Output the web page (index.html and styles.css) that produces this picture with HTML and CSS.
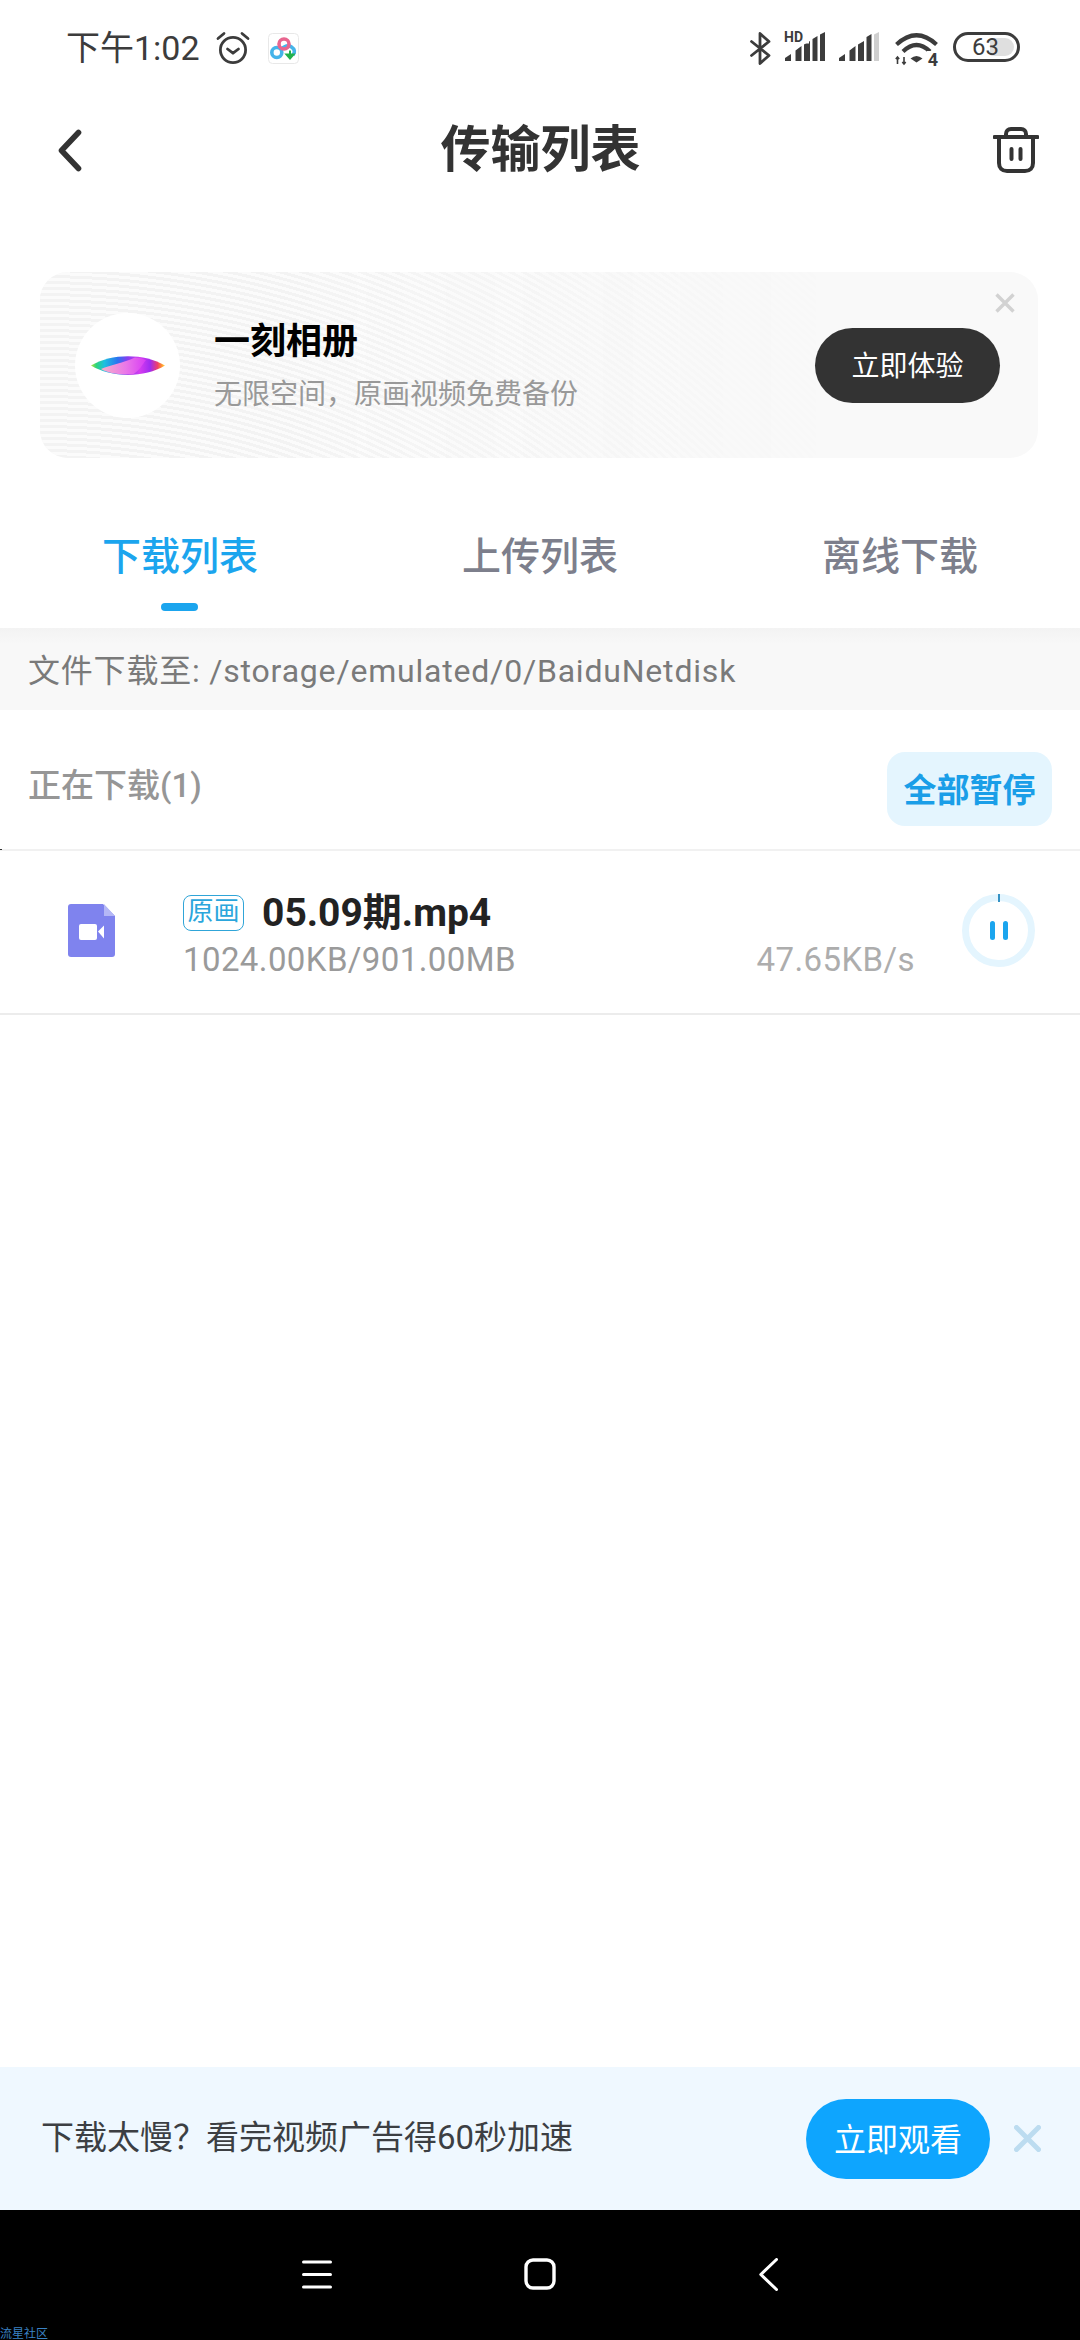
FILE: index.html
```html
<!DOCTYPE html>
<html lang="zh-CN">
<head>
<meta charset="utf-8">
<title>传输列表</title>
<link rel="stylesheet" href="styles.css">
</head>
<body>
<div class="page">
  <div class="status">
    <span class="time">下午1:02</span>
    <svg class="ic-alarm" viewBox="0 0 34 34" fill="none" stroke="#3c3c3c" stroke-width="2.800" stroke-linecap="round" stroke-linejoin="round"><circle cx="17" cy="19" r="12.600"/><path d="M11.500 18l5.500 4.200 5.500-4.200"/><path d="M2 7.500L8 2.500M32 7.500L26 2.500"/></svg>
    <svg class="ic-app" viewBox="0 0 31 31"><rect x=".5" y=".5" width="30" height="30" rx="4" fill="#fff" stroke="#e8e8e8"/><circle cx="8.800" cy="19.500" r="5" fill="none" stroke="#45b4ea" stroke-width="3.600"/><path d="M12.500 17c4-4 8-5 11-3 3 2 4 5 1.500 8" fill="none" stroke="#45b4ea" stroke-width="3.600"/><circle cx="16" cy="11" r="5" fill="none" stroke="#e8658f" stroke-width="3.600"/><path d="M22 17.500v5M18.500 21.500h7l-3.500 4z" fill="#22b14c" stroke="#22b14c" stroke-width="2"/></svg>
    <span class="status-gap"></span>
    <svg class="ic-bt" viewBox="0 0 21 33" fill="none" stroke="#3c3c3c" stroke-width="2.800" stroke-linecap="round" stroke-linejoin="round"><path d="M1.500 9.500L19 23.500 10 31.500V1.500L19 9.500 1.500 23.500"/></svg>
    <span class="hd-signal">
      <svg class="ic-sig" viewBox="0 0 40 29" fill="#3c3c3c"><path d="M0 29v-3l6-4v7zM10.500 29V18.500l6-4.500v15zM19 29V12.500l6-3.500v20zM27.500 29V7l5-3v25zM35 29V2.500l5-2.500v29z"/></svg>
      <span class="hd">HD</span>
    </span>
    <svg class="ic-sig ic-sig2" viewBox="0 0 40 29"><path fill="#3c3c3c" d="M0 29v-3l6-4v7zM10.500 29V18.500l6-4.500v15zM19 29V12.500l6-3.500v20zM27.500 29V5l5-3v27z"/><path fill="#cfcfcf" d="M35 29V2.500l5-2.500v29z"/></svg>
    <span class="wifi">
      <svg class="ic-wifi" viewBox="0 0 43 34" fill="none"><path d="M1.500 11.500Q21.500 -7 41.500 11.500" stroke="#3c3c3c" stroke-width="4.200"/><path d="M8 18.500Q21.500 5.500 35 18.500" stroke="#3c3c3c" stroke-width="4.200"/><path d="M15.500 25.500Q21.500 20.500 27.500 25.500L21.500 29.500z" fill="#3c3c3c"/><path d="M2.500 24v7M.8 26l1.700-2 1.700 2M9 31v-7M7.300 29l1.700 2 1.700-2" stroke="#3c3c3c" stroke-width="1.600"/></svg>
      <span class="wifi-num">4</span>
    </span>
    <span class="battery"><span class="battery-fill"></span><span class="battery-num">63</span></span>
  </div>

  <div class="header">
    <svg class="ic-back" viewBox="0 0 24 43" fill="none" stroke="#333" stroke-width="5.600" stroke-linecap="round" stroke-linejoin="round"><path d="M20.500 3.500L3.500 21.500 20.500 39.500"/></svg>
    <h1 class="title">传输列表</h1>
    <svg class="ic-trash" viewBox="0 0 46 46" fill="none" stroke="#333" stroke-width="4" stroke-linecap="round" stroke-linejoin="round"><path d="M1.500 10h43"/><path d="M13 9.500V7c0-3 2-5 5-5h10c3 0 5 2 5 5v2.500"/><path d="M6 10v26c0 5 3 8 8 8h18c5 0 8-3 8-8V10"/><path d="M18.500 22v10M27.500 22v10"/></svg>
  </div>

  <div class="banner">
    <div class="logo">
      <svg class="logo-mark" viewBox="0 0 74 19">
        <defs>
          <linearGradient id="lens" x1="0" x2="1" y1="0" y2="0"><stop offset="0" stop-color="#b8e23a"/><stop offset=".07" stop-color="#2ed47a"/><stop offset=".18" stop-color="#1fc0e0"/><stop offset=".36" stop-color="#2b74f0"/><stop offset=".5" stop-color="#8a3cf0"/><stop offset=".66" stop-color="#d63cf0"/><stop offset=".8" stop-color="#a02cf0"/><stop offset=".9" stop-color="#f0406a"/><stop offset=".96" stop-color="#ff9a2e"/><stop offset="1" stop-color="#ffd84a"/></linearGradient>
          <linearGradient id="lens2" x1="0" x2="1" y1="0" y2="0"><stop offset="0" stop-color="#f7b0c8"/><stop offset=".55" stop-color="#ea78e8"/><stop offset="1" stop-color="#d83cf4"/></linearGradient>
        </defs>
        <path d="M0 9.500C20 -3 54 -3 74 9.500 54 22 20 22 0 9.500z" fill="url(#lens)"/>
        <path d="M10 13C20 9 32 7 44 1.500 50 2 52 3 55 4 51 9 49 14 42 18.500 28 19 18 17.500 10 13z" fill="url(#lens2)"/>
      </svg>
    </div>
    <div class="banner-text">
      <div class="banner-title">一刻相册</div>
      <div class="banner-sub">无限空间，原画视频免费备份</div>
    </div>
    <button class="banner-btn">立即体验</button>
    <svg class="banner-close" viewBox="0 0 20 20" fill="none" stroke="#d2d2d2" stroke-width="3.400"><path d="M1.500 1.500l17 17M18.500 1.500l-17 17"/></svg>
  </div>

  <div class="tabs">
    <div class="tab active">下载列表<span class="tab-bar"></span></div>
    <div class="tab">上传列表</div>
    <div class="tab">离线下载</div>
  </div>

  <div class="path"><span class="path-text">文件下载至: /storage/emulated/0/BaiduNetdisk</span></div>

  <div class="section">
    <span class="section-title">正在下载(1)</span>
    <button class="section-btn">全部暂停</button>
  </div>

  <div class="row">
    <svg class="ic-file" viewBox="0 0 47 53"><path d="M3 0h32l12 12v38a3 3 0 0 1-3 3H3a3 3 0 0 1-3-3V3a3 3 0 0 1 3-3z" fill="#7f83ee"/><path d="M36 0l11 12H36z" fill="#b4b7f6"/><rect x="11" y="20" width="18" height="16" rx="2" fill="#fff"/><path d="M30 27.500l6-6v13z" fill="#fff"/></svg>
    <div class="row-text">
      <div class="row-top"><span class="tag">原画</span><span class="name">05.09期.mp4</span></div>
      <div class="row-bottom"><span class="size">1024.00KB/901.00MB</span><span class="speed">47.65KB/s</span></div>
    </div>
    <div class="ring">
      <span class="ring-tick"></span>
      <span class="pause"></span>
      <span class="pause"></span>
    </div>
  </div>

  <div class="spacer"></div>

  <div class="promo">
    <span class="promo-text">下载太慢？看完视频广告得60秒加速</span>
    <button class="promo-btn">立即观看</button>
    <svg class="promo-close" viewBox="0 0 27 27" fill="none" stroke="#bcdcf0" stroke-width="5" stroke-linecap="round"><path d="M2.500 2.500l22 22M24.500 2.500l-22 22"/></svg>
  </div>

  <div class="nav">
    <svg class="nav-menu" viewBox="0 0 30 29" fill="none" stroke="#fff" stroke-width="3" stroke-linecap="round"><path d="M1.500 2h27M1.500 14.500h27M1.500 27h27"/></svg>
    <svg class="nav-home" viewBox="0 0 32 32" fill="none" stroke="#fff" stroke-width="3.400"><rect x="2" y="2" width="28" height="28" rx="7"/></svg>
    <svg class="nav-back" viewBox="0 0 19 33" fill="none" stroke="#fff" stroke-width="3" stroke-linecap="round" stroke-linejoin="round"><path d="M17.500 1.500L1.800 16.500 17.500 31.500"/></svg>
    <span class="watermark">流星社区</span>
  </div>
</div>
</body>
</html>
```
FILE: styles.css
```css
* { box-sizing: border-box; }
html, body { margin: 0; padding: 0; background: #fff; }
body { font-family: Roboto, "Noto Sans CJK SC", sans-serif; }
button { border: 0; font-family: inherit; padding: 0; }
.page { width: 1080px; height: 2340px; display: flex; flex-direction: column; overflow: hidden; background: #fff; }

.status { height: 96px; display: flex; align-items: center; padding: 0 60px 0 66px; color: #3c3c3c; flex: none; }
.time { font-size: 34px; line-height: 40px; width: 134px; white-space: nowrap; }
.ic-alarm { width: 34px; height: 34px; margin-left: 16px; }
.ic-app { width: 31px; height: 31px; margin-left: 18px; }
.status-gap { flex: 1; }
.ic-bt { width: 21px; height: 33px; }
.hd-signal { position: relative; width: 40px; height: 29px; margin-left: 14px; margin-top: -3px; }
.hd { position: absolute; left: -1px; top: -1px; font-size: 14px; line-height: 13px; font-weight: 700; }
.ic-sig { width: 40px; height: 29px; display: block; }
.hd-signal .ic-sig { clip-path: polygon(0 40%, 60% 40%, 60% 0, 100% 0, 100% 100%, 0 100%); }
.ic-sig2 { margin-left: 14px; margin-top: -3px; }
.wifi { position: relative; width: 43px; height: 34px; margin-left: 16px; margin-top: 4px; }
.ic-wifi { width: 43px; height: 34px; display: block; }
.wifi-num { position: absolute; right: 0; bottom: -2px; font-size: 18px; line-height: 18px; font-weight: 700; background: #fff; padding-left: 1px; }
.battery { position: relative; width: 67px; height: 30px; margin-left: 15px; margin-top: -3px; border: 3.500px solid #3c3c3c; border-radius: 15px; display: flex; align-items: center; justify-content: center; overflow: hidden; }
.battery-fill { position: absolute; right: 3px; top: 3px; bottom: 3px; width: 24px; background: #dfdfdf; border-radius: 2px 9px 9px 2px; }
.battery-num { position: relative; font-size: 24px; line-height: 24px; margin-left: -2px; }

.header { height: 108px; display: grid; grid-template-columns: 1fr auto 1fr; align-items: center; padding: 0 41px 0 58px; flex: none; }
.ic-back { width: 24px; height: 43px; justify-self: start; }
.title { margin: 0 0 0 -16px; font-size: 50px; line-height: 60px; font-weight: 700; color: #333; }
.ic-trash { width: 46px; height: 46px; justify-self: end; }

.banner { position: relative; margin: 68px 42px 0 40px; height: 186px; flex: none; border-radius: 28px; background: #f9f9f9; display: flex; align-items: center; padding: 0 38px 0 35px; overflow: hidden; }
.banner::before { content: ""; position: absolute; inset: 0; background: repeating-radial-gradient(circle at 0 900px, #f3f3f3 0 3px, #fbfbfb 3px 6px); -webkit-mask-image: linear-gradient(90deg, #000 0, #000 25%, transparent 80%); mask-image: linear-gradient(90deg, #000 0, #000 25%, transparent 80%); }
.logo { position: relative; width: 105px; height: 105px; border-radius: 50%; background: #fff; display: flex; align-items: center; justify-content: center; flex: none; }
.logo-mark { width: 74px; height: 19px; }
.banner-text { position: relative; flex: 1; margin-left: 34px; margin-top: 4px; }
.banner-title { font-size: 36px; line-height: 48px; font-weight: 700; color: #000; margin-top: -3px; }
.banner-sub { font-size: 28px; line-height: 38px; color: #999; margin-top: 10px; }
.banner-btn { position: relative; width: 185px; height: 75px; padding-bottom: 2px; border-radius: 38px; background: #333; color: #fff; font-size: 28px; }
.banner-close { position: absolute; right: 23px; top: 21px; width: 20px; height: 20px; }

.tabs { display: grid; grid-template-columns: repeat(3, 1fr); height: 170px; flex: none; padding-top: 74px; }
.tab { position: relative; text-align: center; font-size: 39px; line-height: 50px; font-weight: 500; color: #7d7f8c; }
.tab.active { color: #1ba5ee; }
.tab-bar { position: absolute; left: 161px; top: 71px; width: 37px; height: 8px; border-radius: 4px; background: #1ba5ee; }

.path { height: 82px; flex: none; display: flex; align-items: center; padding-left: 28px; background: linear-gradient(#f3f3f3, #f8f8f8 16px); }
.path-text { font-size: 32px; line-height: 42px; color: #7a7a7a; letter-spacing: .8px; margin-top: 3px; }

.section { height: 139px; flex: none; display: flex; align-items: center; justify-content: space-between; padding: 42px 28px 23px; }
.section-title { font-size: 33px; line-height: 44px; font-weight: 500; color: #969696; margin-bottom: 7px; }
.section-btn { width: 165px; height: 74px; padding-bottom: 2px; border-radius: 18px; background: #e4f5fe; color: #1a9ee8; font-size: 33px; font-weight: 700; }

.row { position: relative; height: 166px; flex: none; display: flex; align-items: center; padding: 0 45px 0 68px; border-top: 2px solid #f1f1f1; border-bottom: 2px solid #ececec; }
.row::before { content: ""; position: absolute; left: 0; top: -2px; width: 2px; height: 1px; background: #333; }
.ic-file { width: 47px; height: 53px; flex: none; margin-top: -4px; }
.row-text { flex: 1; margin-left: 68px; }
.row-top { display: flex; align-items: center; height: 46px; margin-top: 8px; }
.tag { width: 61px; height: 36px; border: 1.500px solid #30a5d8; border-radius: 8px; color: #2ba6dc; font-size: 26px; line-height: 31px; text-align: center; white-space: nowrap; }
.name { margin-left: 18px; font-size: 39px; line-height: 46px; font-weight: 700; color: #222; }
.row-bottom { display: flex; justify-content: space-between; margin-top: 2px; font-size: 33px; line-height: 44px; letter-spacing: .4px; }
.size { color: #9a9a9a; }
.speed { color: #adadad; }
.ring { position: relative; flex: none; width: 73px; height: 73px; margin-left: 47px; margin-top: -3px; border: 7px solid #e4f5fe; border-radius: 50%; display: flex; align-items: center; justify-content: center; gap: 8px; }
.ring-tick { position: absolute; left: 29px; top: -7px; width: 2px; height: 8px; background: #3592c4; }
.pause { width: 5px; height: 19px; border-radius: 3px; background: #1ba5ee; }

.spacer { flex: 1; }

.promo { height: 143px; flex: none; display: flex; align-items: center; padding: 0 39px 0 41px; background: #eff8ff; }
.promo-text { flex: 1; font-size: 33px; line-height: 44px; color: #3c3f43; margin-bottom: 2px; white-space: nowrap; }
.promo-btn { width: 184px; height: 80px; padding-bottom: 4px; border-radius: 40px; background: #0ea5fe; color: #fff; font-size: 32px; }
.promo-close { width: 27px; height: 27px; margin-left: 24px; }

.nav { position: relative; height: 130px; flex: none; background: #000; display: flex; align-items: center; justify-content: center; }
.nav-menu { width: 30px; height: 29px; margin-top: -2px; }
.nav-home { width: 32px; height: 32px; margin-left: 192px; margin-top: -2px; }
.nav-back { width: 19px; height: 33px; margin-left: 203px; margin-top: -2px; }
.watermark { position: absolute; left: 0; bottom: -1px; font-size: 12px; line-height: 13px; color: #3a82c4; }
```
